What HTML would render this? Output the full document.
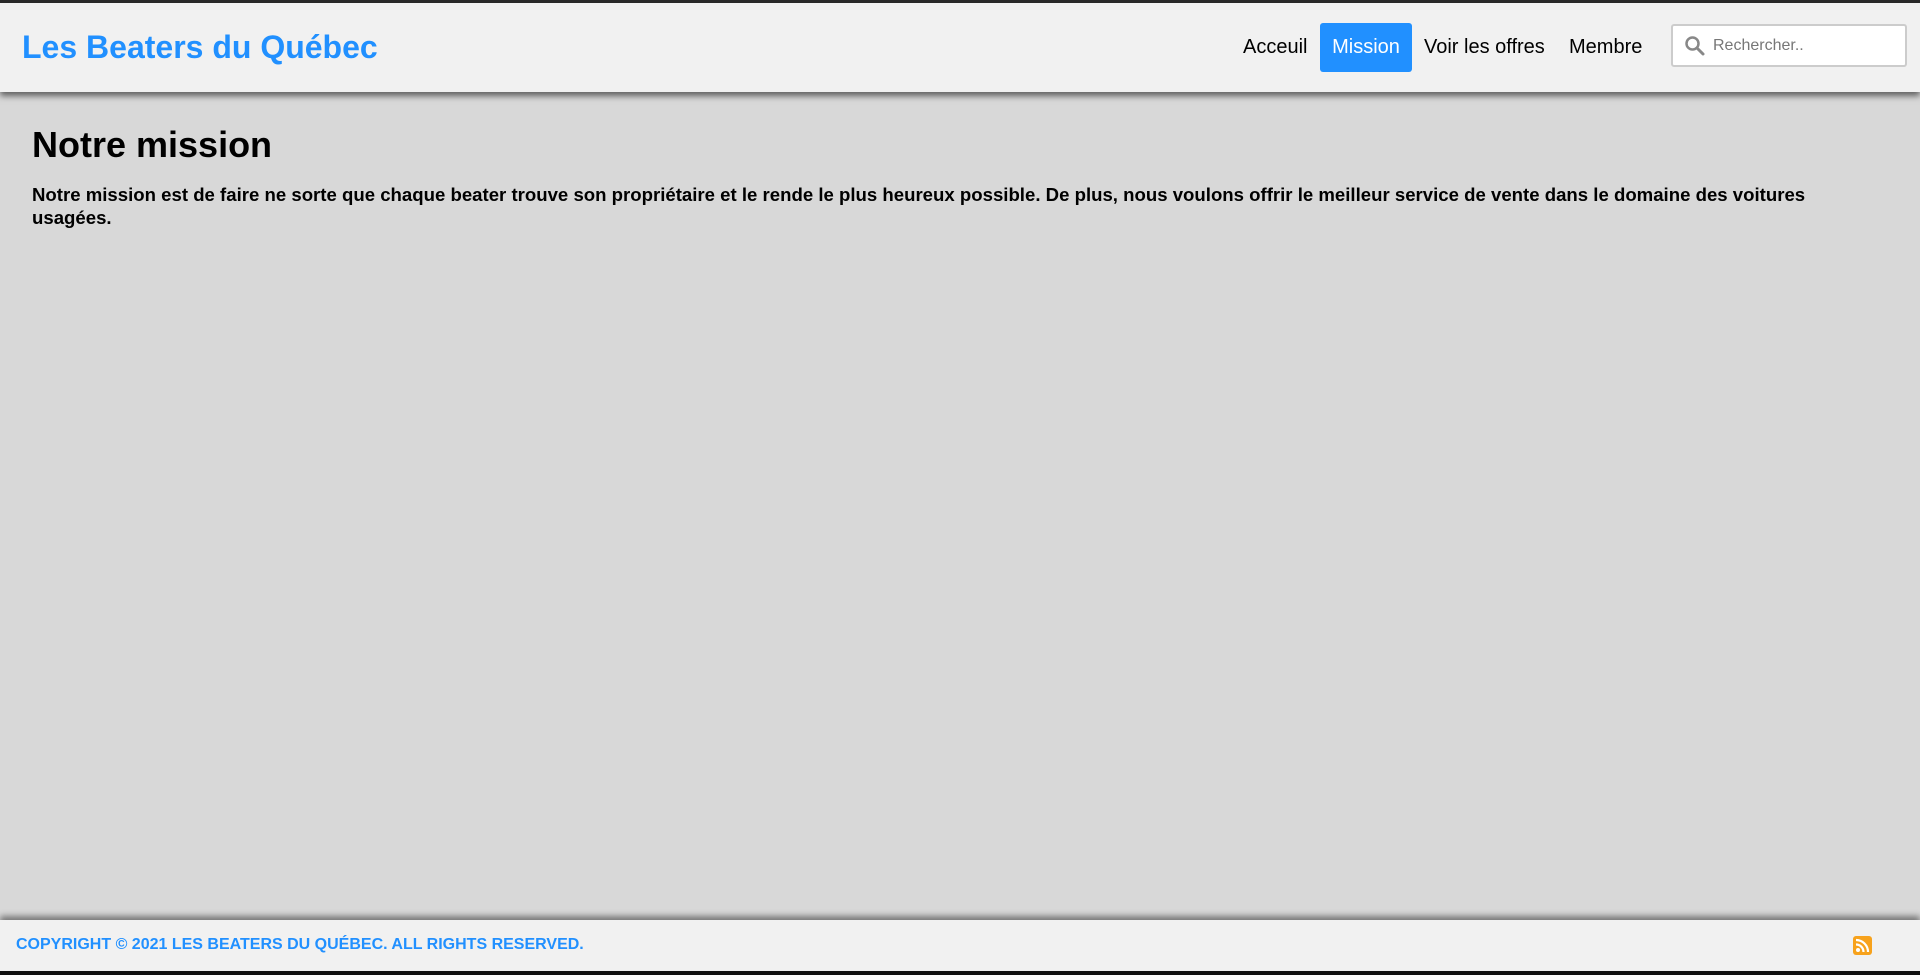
<!DOCTYPE html>
<html><head><meta charset="utf-8"><style>
html,body{margin:0;padding:0;width:1920px;height:975px;overflow:hidden;background:#d8d8d8;font-family:"Liberation Sans",Arial,sans-serif;}
.top{position:absolute;left:0;top:0;width:1920px;height:3px;background:#2a2a2a;}
header{position:absolute;left:0;top:3px;width:1920px;height:89px;background:#f1f1f1;box-shadow:0 4px 6px rgba(0,0,0,0.55);z-index:2;}
.logo{position:absolute;left:22px;top:26px;font-size:32px;font-weight:bold;color:#2190ff;}
nav a{position:absolute;top:20px;height:49px;line-height:49px;font-size:20px;color:#000;text-decoration:none;}
nav a.active{background:#2190ff;color:#fff;border-radius:3px;}
.search{position:absolute;left:1671px;top:21px;width:236px;height:43px;background:#fff;border:2px solid #ccc;border-radius:3px;box-sizing:border-box;}
.search span{position:absolute;left:40px;top:11px;font-size:16px;color:#777;}
.search svg{position:absolute;left:11px;top:9px;}
main{position:absolute;left:32px;top:124px;width:1800px;}
h1{margin:0;font-size:36px;font-weight:bold;color:#000;}
p{margin:17px 0 0;font-size:18.6px;font-weight:bold;line-height:23px;color:#000;}
footer{position:absolute;left:0;top:920px;width:1920px;height:51px;background:#f1f1f1;box-shadow:0 -4px 6px rgba(0,0,0,0.45);}
footer .c{position:absolute;left:16px;top:16px;font-size:16px;font-weight:bold;color:#2190ff;}
footer svg{position:absolute;left:1853px;top:16px;}
.bot{position:absolute;left:0;top:971px;width:1920px;height:4px;background:#111;}
</style></head><body>
<div class="top"></div>
<header>
<div class="logo">Les Beaters du Québec</div>
<nav>
<a style="left:1243px;width:66px;">Acceuil</a>
<a class="active" style="left:1320px;width:92px;text-align:center;">Mission</a>
<a style="left:1424px;">Voir les offres</a>
<a style="left:1569px;">Membre</a>
</nav>
<div class="search"><svg width="22" height="22" viewBox="0 0 22 22"><circle cx="8.5" cy="8.5" r="6" fill="none" stroke="#888" stroke-width="2.5"/><line x1="13" y1="13" x2="19" y2="19" stroke="#888" stroke-width="3" stroke-linecap="round"/></svg><span>Rechercher..</span></div>
</header>
<main>
<h1>Notre mission</h1>
<p>Notre mission est de faire ne sorte que chaque beater trouve son propriétaire et le rende le plus heureux possible. De plus, nous voulons offrir le meilleur service de vente dans le domaine des voitures usagées.</p>
</main>
<footer>
<div class="c">COPYRIGHT © 2021 LES BEATERS DU QUÉBEC. ALL RIGHTS RESERVED.</div>
<svg width="19" height="19" viewBox="0 0 19 19"><rect width="19" height="19" rx="3" fill="#f7a21c"/><circle cx="5" cy="14" r="2" fill="#fff"/><path d="M3 8.5a7.5 7.5 0 0 1 7.5 7.5M3 4a12 12 0 0 1 12 12" fill="none" stroke="#fff" stroke-width="2.2"/></svg>
</footer>
<div class="bot"></div>
</body></html>
